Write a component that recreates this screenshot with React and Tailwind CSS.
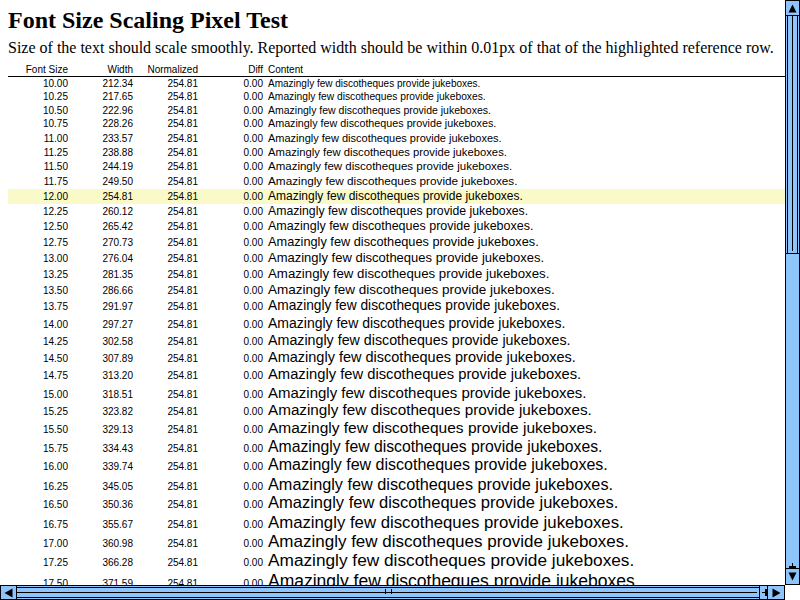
import React from 'react'

const rows = [
  [10, '212.34'], [10.25, '217.65'], [10.5, '222.96'], [10.75, '228.26'],
  [11, '233.57'], [11.25, '238.88'], [11.5, '244.19'], [11.75, '249.50'],
  [12, '254.81'], [12.25, '260.12'], [12.5, '265.42'], [12.75, '270.73'],
  [13, '276.04'], [13.25, '281.35'], [13.5, '286.66'], [13.75, '291.97'],
  [14, '297.27'], [14.25, '302.58'], [14.5, '307.89'], [14.75, '313.20'],
  [15, '318.51'], [15.25, '323.82'], [15.5, '329.13'], [15.75, '334.43'],
  [16, '339.74'], [16.25, '345.05'], [16.5, '350.36'], [16.75, '355.67'],
  [17, '360.98'], [17.25, '366.28'], [17.5, '371.59'], [17.75, '376.90'],
  [18, '382.21'],
]

const Row = ({ fs, width }) => {
  // row height grows a bit slower than the font
  const h = 4.08 + 0.91 * fs
  const hi = fs === 12
  return (
    <div
      className={hi ? 'flex items-baseline whitespace-nowrap bg-[#fafac8]' : 'flex items-baseline whitespace-nowrap'}
      style={{ height: h }}
    >
      <div className='w-[65px] shrink-0 pr-[5px] text-right text-[10px] leading-none'>{fs.toFixed(2)}</div>
      <div className='w-[65px] shrink-0 pr-[5px] text-right text-[10px] leading-none'>{width}</div>
      <div className='w-[65px] shrink-0 pr-[5px] text-right text-[10px] leading-none'>254.81</div>
      <div className='w-[65px] shrink-0 pr-[5px] text-right text-[10px] leading-none'>0.00</div>
      <div style={{ fontSize: fs, lineHeight: h + 'px' }}>Amazingly few discotheques provide jukeboxes.</div>
    </div>
  )
}

const VScroll = () => (
  <div className='w-[15px] shrink-0 flex flex-col'>
    <div className='h-[16px] border border-black bg-[#8ec4fc] flex items-center justify-center'>
      <svg width='9' height='9' viewBox='0 0 9 9'><polygon points='4.5,0.5 8.5,8.5 0.5,8.5' fill='black' /></svg>
    </div>
    <div className='flex-1 flex flex-col border-x border-black bg-[#8ec4fc]'>
      <div className='h-[238px] border-b border-black flex justify-center'>
        <div className='w-[11px] h-full border-x border-black flex justify-center'>
          <div className='w-px h-[calc(100%-2px)] bg-black' />
        </div>
      </div>
      <div className='flex-1' />
      <div className='flex flex-col items-center'>
        <div className='w-px h-[3px] bg-black' />
        <div className='w-[7px] h-[2px] bg-black' />
      </div>
    </div>
    <div className='h-[17px] border border-black bg-[#8ec4fc] flex items-center justify-center'>
      <svg width='9' height='9' viewBox='0 0 9 9'><polygon points='0.5,0.5 8.5,0.5 4.5,8.5' fill='black' /></svg>
    </div>
  </div>
)

const HScroll = () => (
  <div className='flex-1 flex'>
    <div className='w-[17px] border border-black bg-[#8ec4fc] flex items-center justify-center'>
      <svg width='9' height='10' viewBox='0 0 9 10'><polygon points='0.5,5 8.5,0.5 8.5,9.5' fill='black' /></svg>
    </div>
    <div className='flex-1 flex border-y border-black bg-[#8ec4fc]'>
      <div className='w-[743px] border-r border-black flex flex-col justify-center'>
        <div className='h-[11px] border-y border-black flex items-center relative'>
          <div className='h-px w-[calc(100%-2px)] bg-black' />
          <div className='absolute left-[368px] top-[1px] w-px h-[5px] bg-black' />
          <div className='absolute left-[374px] top-[1px] w-px h-[5px] bg-black' />
        </div>
      </div>
      <div className='flex-1' />
      <div className='flex items-center'>
        <div className='h-px w-[3px] bg-black' />
        <div className='w-[2px] h-[7px] bg-black' />
      </div>
    </div>
    <div className='w-[18px] border border-black bg-[#8ec4fc] flex items-center justify-center'>
      <svg width='9' height='10' viewBox='0 0 9 10'><polygon points='0.5,0.5 8.5,5 0.5,9.5' fill='black' /></svg>
    </div>
  </div>
)

const App = () => {
  return (
    <div className='w-[800px] h-[600px] flex flex-col bg-white text-black overflow-hidden'>
      <div className='flex flex-1 min-h-0'>
        <div className='flex-1 min-w-0 overflow-hidden pl-[8px] pt-[7px]'>
          <h1 className='font-["Liberation_Serif",serif] font-bold text-[24px] leading-[27px] whitespace-nowrap'>
            Font Size Scaling Pixel Test
          </h1>
          <p className='mt-[5px] font-["Liberation_Serif",serif] text-[16px] leading-[18px] whitespace-nowrap'>
            Size of the text should scale smoothly. Reported width should be within 0.01px of that of the highlighted reference row.
          </p>
          <div className='mt-[7px] font-["Liberation_Sans",sans-serif]'>
            <div className='flex h-[13px] border-b border-black text-[10px] leading-[11px] whitespace-nowrap'>
              <div className='w-[65px] shrink-0 pr-[5px] text-right'>Font Size</div>
              <div className='w-[65px] shrink-0 pr-[5px] text-right'>Width</div>
              <div className='w-[65px] shrink-0 pr-[5px] text-right'>Normalized</div>
              <div className='w-[65px] shrink-0 pr-[5px] text-right'>Diff</div>
              <div>Content</div>
            </div>
            { rows.map(([fs, width]) => <Row key={fs} fs={fs} width={width} />) }
          </div>
        </div>
        <VScroll />
      </div>
      <div className='flex h-[15px] shrink-0'>
        <HScroll />
        <div className='w-[15px] bg-white' />
      </div>
    </div>
  )
}

export default App
